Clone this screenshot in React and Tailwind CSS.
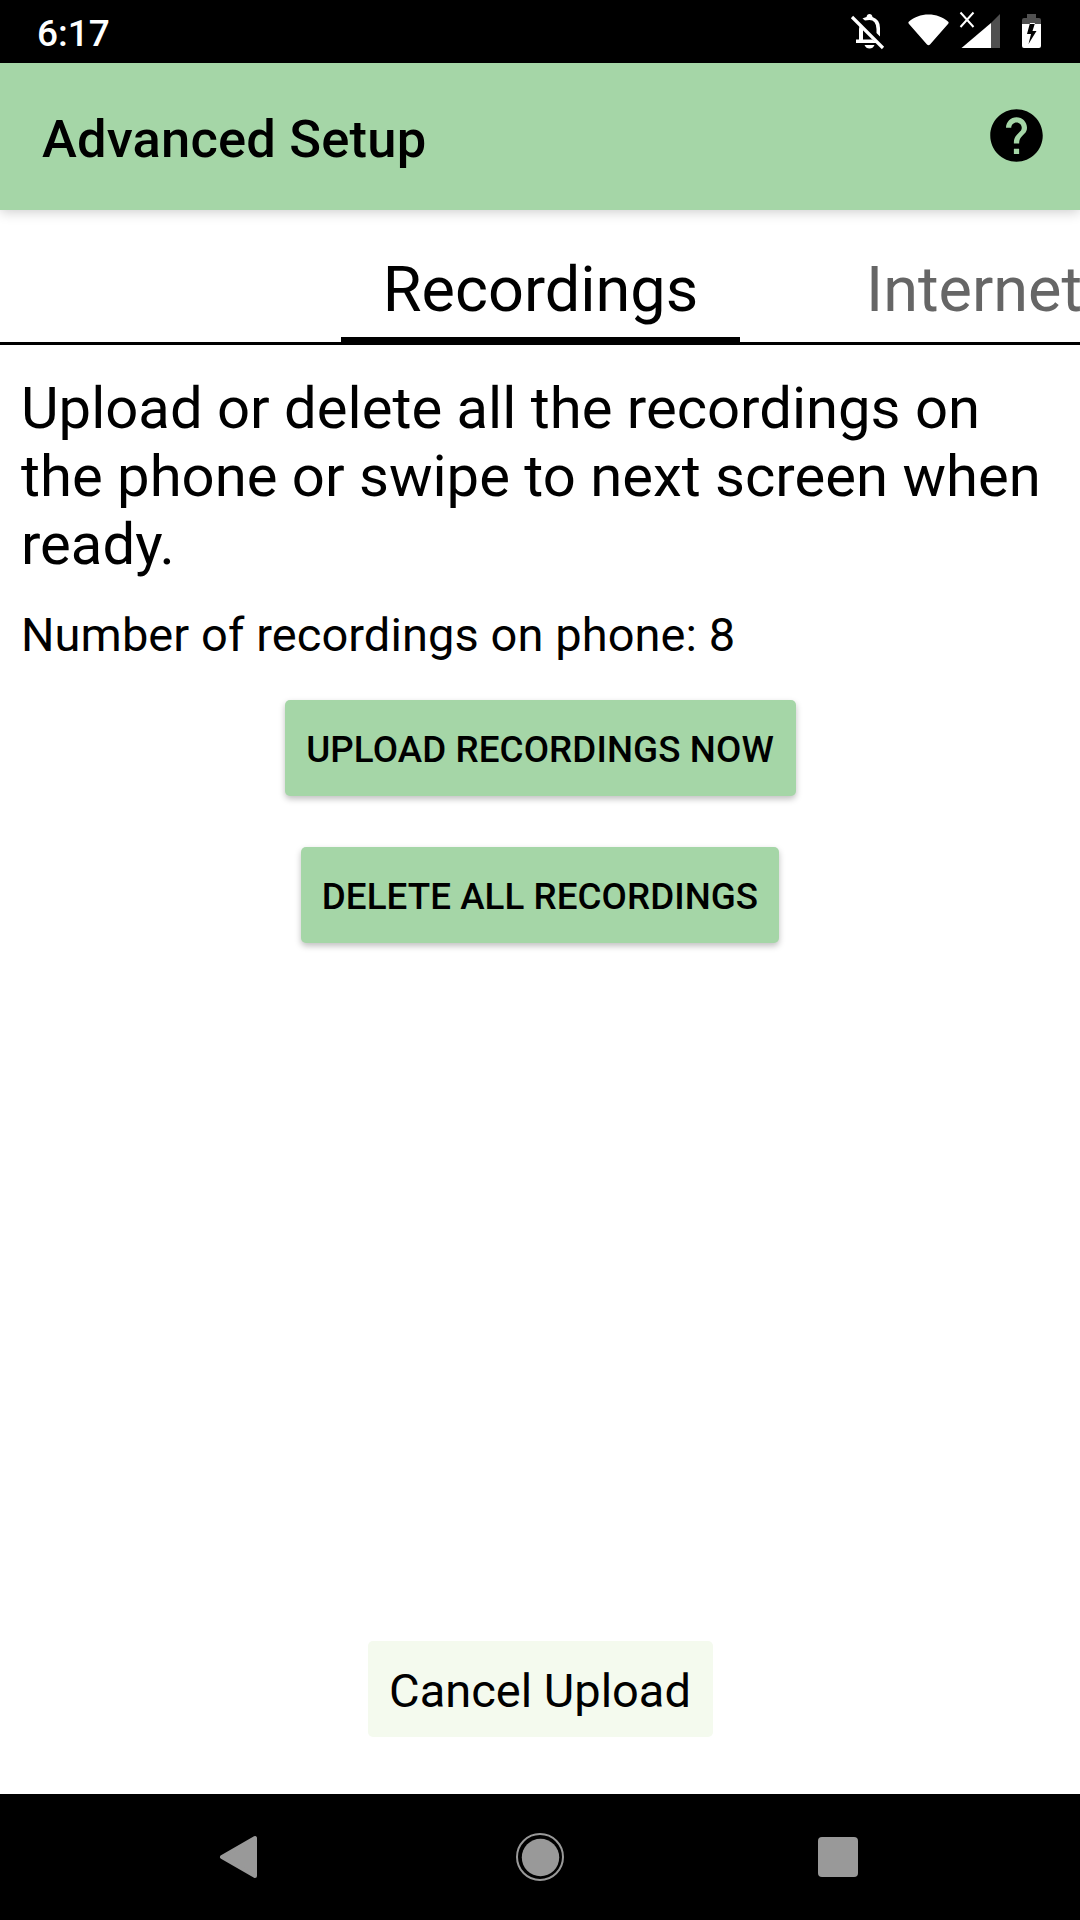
export default function App() {
  return (
    <div className="flex h-[1920px] w-[1080px] flex-col overflow-hidden bg-white font-[Roboto,sans-serif] text-black">
      <div className="flex h-[63px] shrink-0 items-center justify-between bg-black pl-[37px] text-white">
        <span className="pt-[4px] text-[37px] leading-[42px] font-medium">6:17</span>
        <svg className="h-[63px] w-[240px]" viewBox="840 0 240 63" fill="white">
          <path d="M852 17L883 48" stroke="white" strokeWidth="3.2" />
          <path d="M856 43V39.5H859V29Q859 26 860.5 24L863 26.500V39.5H872L877 43ZM864.500 45H874.500Q873 48.500 869.500 48.500Q866 48.500 864.500 45ZM865 20.500L862.500 18.500Q864 17.500 866.500 17Q867 14 869.500 14Q872 14 872.500 17Q880 19.500 880 28V36.500L876.500 33V29Q876 20 869.500 20Q867 20 865 20.500Z" />
          <path d="M908.500 22C919 12 938 12 948.500 22Q949 23 948 24L930 44.500Q928.500 46 927 44.500L909 24Q908 23 908.500 22Z" />
          <path d="M1000 14V48H991V23Z" fill="#505050" /><path d="M991 23V48H961.500Z" />
          <path d="M960.500 12.500L973.500 27M973.500 12.500L960.500 27" stroke="white" strokeWidth="2" />
          <path d="M1022 24V20Q1022 18 1024 18H1027V14H1036V18H1039Q1041 18 1041 20V24Z" fill="#505050" />
          <path fillRule="evenodd" d="M1022 24H1041V46Q1041 48 1039 48H1024Q1022 48 1022 46ZM1030 23L1027 34H1031L1028.500 44L1036.500 31H1032.500L1035 23Z" />
        </svg>
      </div>
      <header className="z-10 flex h-[147px] shrink-0 items-center justify-between bg-[#a5d6a7] pr-[32px] pl-[42px] shadow-[0_2px_12px_rgba(0,0,0,0.2)]">
        <h1 className="pt-[5px] text-[52.5px] font-medium tracking-[0.18px]">Advanced Setup</h1>
        <svg className="mb-[2px] size-[63px]" viewBox="0 0 24 24"><path d="M12 2C6.48 2 2 6.48 2 12s4.48 10 10 10 10-4.48 10-10S17.52 2 12 2zm1 17h-2v-2h2v2zm2.07-7.75l-.9.92C13.45 12.9 13 13.5 13 15h-2v-.5c0-1.1.45-2.1 1.17-2.83l1.24-1.26c.37-.36.59-.86.59-1.41 0-1.1-.9-2-2-2s-2 .9-2 2H8c0-2.21 1.79-4 4-4s4 1.79 4 4c0 .88-.36 1.68-.93 2.25z" /></svg>
      </header>
      <nav className="flex h-[135px] shrink-0 border-b-[3px] border-black pl-[341px] text-[63px]">
        <div className="flex h-[132px] w-[399px] shrink-0 items-end justify-center border-b-[5px] border-black pb-[10px] leading-[74px]">Recordings</div>
        <div className="flex h-[132px] shrink-0 items-end pb-[15px] pl-[126px] leading-[74px] text-[#666]">Internet</div>
      </nav>
      <main className="flex flex-1 flex-col items-center">
        <p className="w-full pt-[29px] pl-[21px] text-[58px] leading-[68px]">Upload or delete all the recordings on<br />the phone or swipe to next screen when<br />ready.</p>
        <p className="w-full pt-[29px] pl-[21px] text-[47px] leading-[55px] tracking-[0.08px]">Number of recordings on phone: 8</p>
        <button className="mt-[38px] h-[96px] w-[511px] rounded-[5px] bg-[#a5d6a7] pt-[3px] text-[36.75px] font-medium tracking-[0.1px] shadow-[0_3px_6px_rgba(0,0,0,0.25)]">UPLOAD RECORDINGS NOW</button>
        <button className="mt-[51px] h-[96px] w-[478px] rounded-[5px] bg-[#a5d6a7] pt-[3px] text-[36.75px] font-medium tracking-[0.05px] shadow-[0_3px_6px_rgba(0,0,0,0.25)]">DELETE ALL RECORDINGS</button>
        <button className="mt-auto mb-[57px] h-[96px] w-[345px] rounded-[5px] bg-[#f4faee] pt-[4px] text-[47px]">Cancel Upload</button>
      </main>
      <footer className="h-[126px] shrink-0 bg-black">
        <svg viewBox="0 0 1080 126" fill="#999"><path d="M222 63L255 44V82Z" stroke="#999" strokeWidth="4" strokeLinejoin="round" /><circle cx="540.5" cy="63.500" r="18.700" /><circle cx="540" cy="63" r="23" fill="none" stroke="#999" strokeWidth="2" /><rect x="818" y="43" width="40" height="40" rx="4" /></svg>
      </footer>
    </div>
  );
}
